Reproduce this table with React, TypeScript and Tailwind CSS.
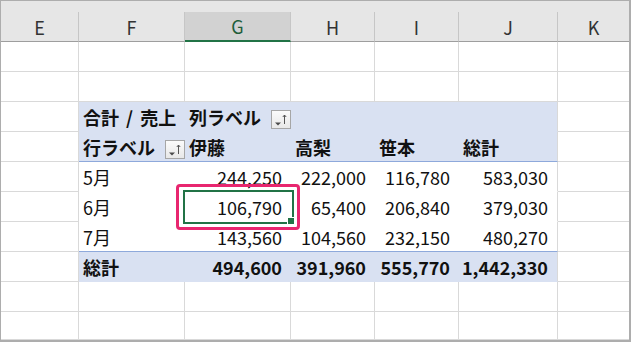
import React from "react";

const W = ["w-[78px]", "w-[106px]", "w-[106px]", "w-[84px]", "w-[84px]", "w-[99px]"];
const LETTERS = ["E", "F", "G", "H", "I", "J"];

function FilterButton() {
  return (
    <div className="self-end mb-[2px] w-[20px] h-[19px] shrink-0 border border-[#a6a6a6] bg-gradient-to-b from-[#fbfbfb] to-[#e8e8e8]">
      <svg width="18" height="17" viewBox="0 0 18 17">
        <polygon points="3,11.5 9,11.5 6,14.5" fill="#4a4a4a" />
        <line x1="12.5" y1="4" x2="12.5" y2="13" stroke="#555" strokeWidth="1" />
        <polyline points="10.8,6 12.5,4 14.2,6" fill="none" stroke="#555" strokeWidth="1" />
      </svg>
    </div>
  );
}

function PlainRow({ last }: { last?: boolean }) {
  return (
    <div className={last ? "flex flex-1" : "flex h-[30px] shrink-0"}>
      {W.map((w, i) => (
        <div key={i} className={`${w} shrink-0 border-r border-b border-[#d9d9d9]`} />
      ))}
      <div className="flex-1 border-b border-[#d9d9d9]" />
    </div>
  );
}

type PCell = { text?: string; align?: "l" | "r"; filter?: boolean };

function PivotRow({
  cells,
  blue,
  bottom,
  bold,
}: {
  cells: PCell[];
  blue: boolean;
  bottom: "line" | "same";
  bold?: boolean;
}) {
  const bg = blue ? "bg-[#d9e1f2]" : "bg-white";
  const bb =
    bottom === "line"
      ? "border-b-[#8ea9db]"
      : blue
      ? "border-b-[#d9e1f2]"
      : "border-b-white";
  return (
    <div className="flex h-[30px] shrink-0">
      <div className="w-[78px] shrink-0 border-r border-b border-[#d9d9d9]" />
      {cells.map((c, i) => {
        const w = W[i + 1];
        const isLast = i === cells.length - 1;
        const align = c.align === "r" ? "justify-end pr-[9px]" : "justify-between pl-[4px]";
        return (
          <div
            key={i}
            className={`${w} shrink-0 border-b ${bb} ${bg} ${
              isLast ? "border-r border-r-[#d9d9d9]" : ""
            } flex items-center ${align} ${bold ? "font-bold" : ""}`}
          >
            {c.text !== undefined && (
              <span className="whitespace-pre text-[#111] [word-spacing:3px]">{c.text}</span>
            )}
            {c.filter && <FilterButton />}
          </div>
        );
      })}
      <div className="flex-1 border-b border-[#d9d9d9]" />
    </div>
  );
}

export default function App() {
  return (
    <div className="relative w-[631px] h-[342px] overflow-hidden bg-white border-l border-t border-r-2 border-b-2 border-[#adadad] font-['Noto_Sans_CJK_JP',sans-serif] text-[18px] leading-none">
      <div className="flex flex-col h-full">
        {/* column header */}
        <div className="flex h-[41px] shrink-0 items-end bg-[#e6e6e6]">
          {W.map((w, i) => {
            const sel = LETTERS[i] === "G";
            return (
              <div
                key={i}
                className={`${w} shrink-0 h-[30px] border-r border-r-[#c6c6c6] flex items-center justify-center ${
                  sel
                    ? "bg-[#d2d2d2] border-b-2 border-b-[#217346] text-[#1f5e3a]"
                    : "border-b border-b-[#9e9e9e] text-[#333]"
                }`}
              >
                {LETTERS[i]}
              </div>
            );
          })}
          <div className="flex-1 h-[30px] border-b border-b-[#9e9e9e] flex items-center justify-center text-[#333]">
            K
          </div>
        </div>

        <PlainRow />
        <PlainRow />

        <PivotRow
          blue
          bottom="same"
          bold
          cells={[{ text: "合計 / 売上" }, { text: "列ラベル", filter: true }, {}, {}, {}]}
        />
        <PivotRow
          blue
          bottom="line"
          bold
          cells={[
            { text: "行ラベル", filter: true },
            { text: "伊藤" },
            { text: "高梨" },
            { text: "笹本" },
            { text: "総計" },
          ]}
        />
        <PivotRow
          blue={false}
          bottom="same"
          cells={[
            { text: "5月" },
            { text: "244,250", align: "r" },
            { text: "222,000", align: "r" },
            { text: "116,780", align: "r" },
            { text: "583,030", align: "r" },
          ]}
        />
        <PivotRow
          blue={false}
          bottom="same"
          cells={[
            { text: "6月" },
            { text: "106,790", align: "r" },
            { text: "65,400", align: "r" },
            { text: "206,840", align: "r" },
            { text: "379,030", align: "r" },
          ]}
        />
        <PivotRow
          blue={false}
          bottom="line"
          cells={[
            { text: "7月" },
            { text: "143,560", align: "r" },
            { text: "104,560", align: "r" },
            { text: "232,150", align: "r" },
            { text: "480,270", align: "r" },
          ]}
        />
        <PivotRow
          blue
          bottom="same"
          bold
          cells={[
            { text: "総計" },
            { text: "494,600", align: "r" },
            { text: "391,960", align: "r" },
            { text: "555,770", align: "r" },
            { text: "1,442,330", align: "r" },
          ]}
        />
        <PlainRow />
        <PlainRow last />
      </div>

      {/* active cell selection */}
      <div className="absolute left-[182px] top-[189px] w-[111px] h-[34px] border-2 border-[#217346]" />
      <div className="absolute left-[286px] top-[216px] w-[8px] h-[8px] bg-[#217346] border border-white" />

      {/* pink annotation */}
      <div className="absolute left-[175px] top-[183px] w-[124px] h-[46px] border-[3px] border-[#e8266f] rounded-[4px]" />
    </div>
  );
}
